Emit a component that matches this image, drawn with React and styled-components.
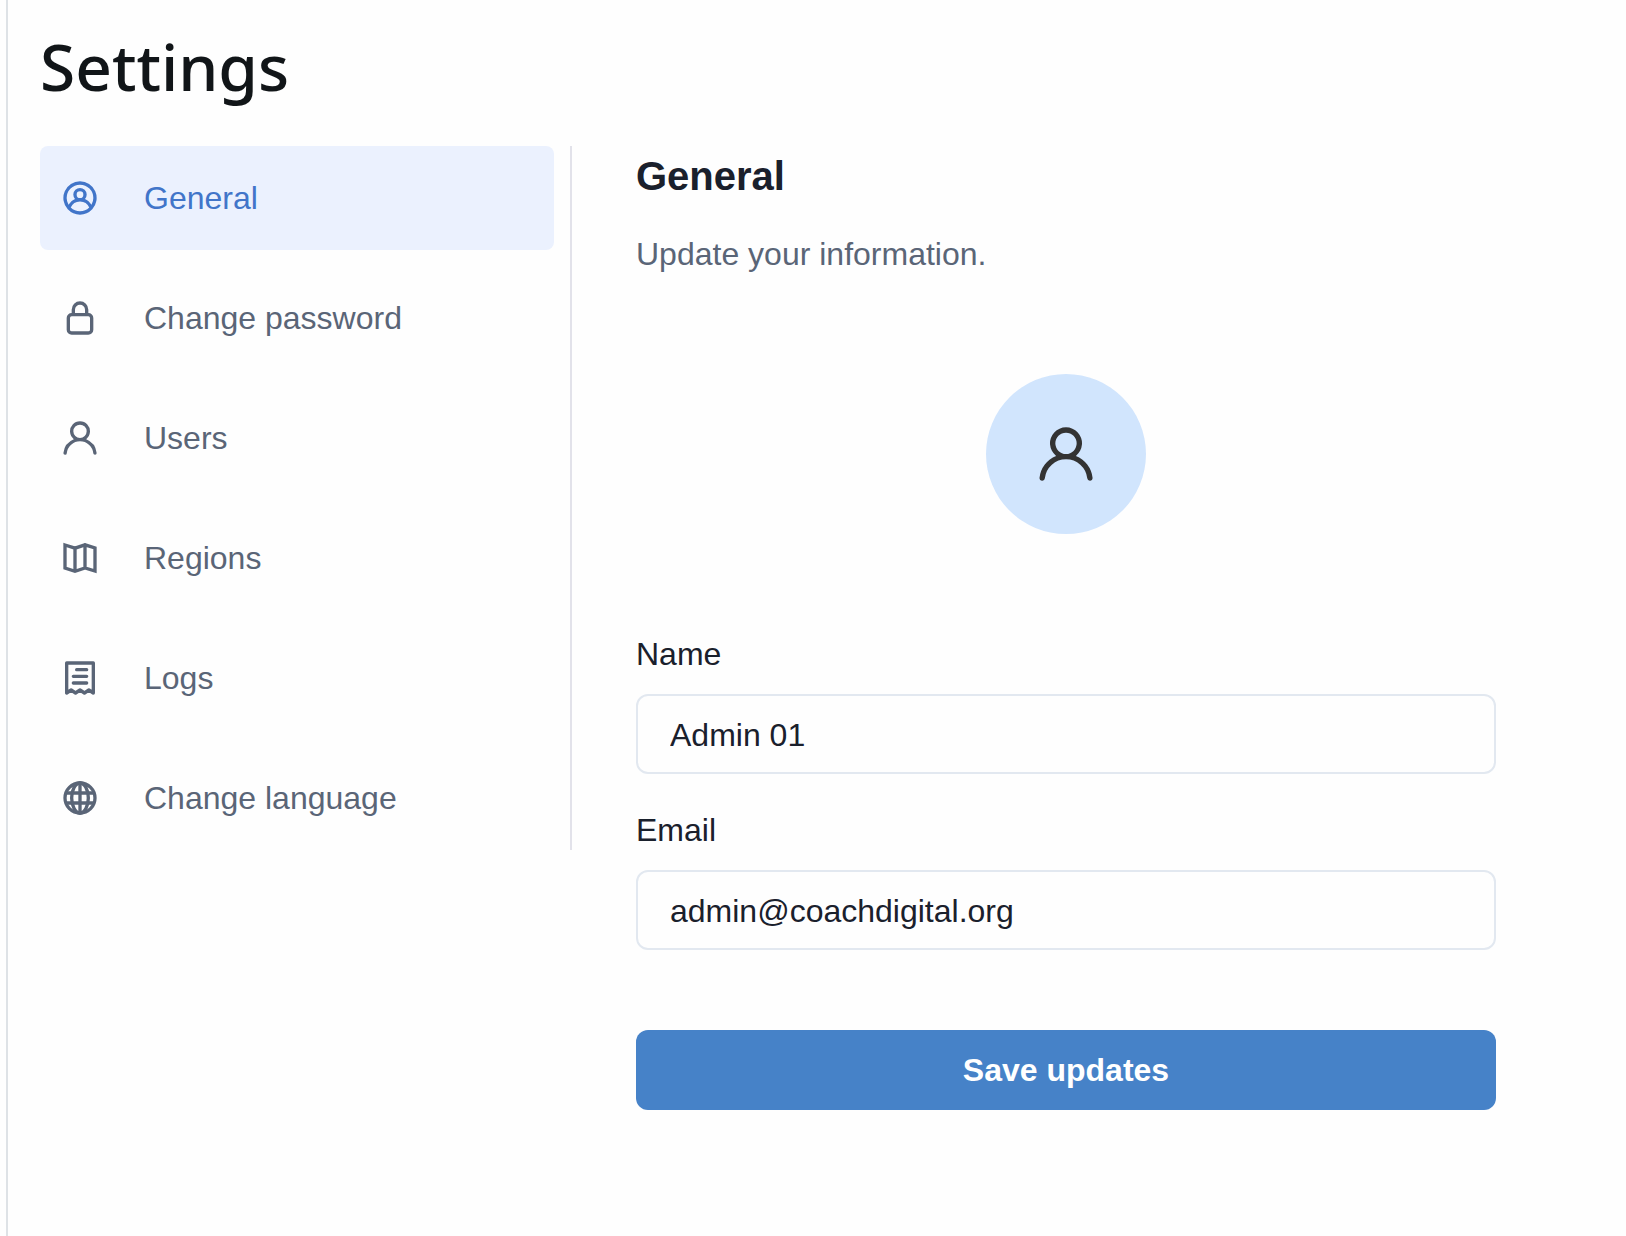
import React, { useState } from "react";
import styled, { createGlobalStyle } from "styled-components";

const GlobalStyle = createGlobalStyle`
  *, *::before, *::after { box-sizing: border-box; }
  body {
    margin: 0;
    background: #fefefe;
    color: #1a202c;
    font-family: "Liberation Sans", Arial, sans-serif;
    font-size: 32px;
    line-height: 48px;
  }
  h1, h2, p { margin: 0; }
`;

const Page = styled.main`
  min-height: 100vh;
  margin-left: 6px;
  padding: 24px 32px;
  border-left: 2px solid #dee2e6;
`;

const Title = styled.h1`
  margin-bottom: 36px;
  color: #111518;
  font-family: "Noto Sans", sans-serif;
  font-size: 64px;
  font-weight: 500;
  line-height: 86px;
`;

const Columns = styled.div`
  display: grid;
  grid-template-columns: minmax(360px, 532px) minmax(0, 1fr);
  align-items: start;
`;

const Menu = styled.nav`
  display: flex;
  flex-direction: column;
  gap: 16px;
  padding-right: 16px;
  border-right: 2px solid #e2e2ea;
`;

const MenuLink = styled.a`
  display: flex;
  align-items: center;
  gap: 44px;
  height: 104px;
  padding: 0 20px;
  border-radius: 8px;
  background: ${({ $active }) => ($active ? "#ebf1fe" : "transparent")};
  color: ${({ $active }) => ($active ? "#4175c9" : "#5a6577")};
  text-decoration: none;
`;

const Icon = styled.svg`
  flex: none;
  width: ${({ $size }) => $size}px;
  height: ${({ $size }) => $size}px;
`;

const Panel = styled.section`
  padding: 0 98px 0 64px;
`;

const PanelTitle = styled.h2`
  margin-bottom: 24px;
  font-size: 40px;
  font-weight: 700;
  line-height: 60px;
`;

const Hint = styled.p`
  color: #5a6577;
`;

const Avatar = styled.div`
  display: grid;
  place-items: center;
  width: 160px;
  height: 160px;
  margin: 96px auto;
  border-radius: 50%;
  background: #d1e5fd;
  color: #333333;
`;

const Form = styled.form`
  display: flex;
  flex-direction: column;
  gap: 32px;
`;

const Field = styled.div`
  display: flex;
  flex-direction: column;
  gap: 16px;
`;

const Input = styled.input`
  width: 100%;
  height: 80px;
  padding: 2px 32px 0;
  border: 2px solid #e2e8f0;
  border-radius: 12px;
  background: transparent;
  color: inherit;
  font: inherit;
`;

const SaveButton = styled.button`
  height: 80px;
  margin-top: 48px;
  border: 0;
  border-radius: 12px;
  background: #4682c8;
  color: #ffffff;
  font: inherit;
  font-weight: 700;
  cursor: pointer;
`;

const USER_PATH =
  "M15.71,12.71a6,6,0,1,0-7.42,0,10,10,0,0,0-6.22,8.18,1,1,0,0,0,2,.22,8,8,0,0,1,15.9,0,1,1,0,0,0,1,.89h.11a1,1,0,0,0,.88-1.1A10,10,0,0,0,15.71,12.71ZM12,12a4,4,0,1,1,4-4A4,4,0,0,1,12,12Z";

const stroked = {
  fill: "none",
  stroke: "currentColor",
  strokeWidth: 2,
  strokeLinecap: "round",
  strokeLinejoin: "round",
};

const glyphs = {
  account: (
    <path
      fill="currentColor"
      d="M12,2A10,10,0,0,0,4.65,18.76h0a10,10,0,0,0,14.7,0h0A10,10,0,0,0,12,2Zm0,18a8,8,0,0,1-5.55-2.25,6,6,0,0,1,11.1,0A8,8,0,0,1,12,20ZM10,10a2,2,0,1,1,2,2A2,2,0,0,1,10,10Zm8.91,6A8,8,0,0,0,15,12.62a4,4,0,1,0-6,0A8,8,0,0,0,5.09,16,7.92,7.92,0,0,1,4,12a8,8,0,0,1,16,0A7.92,7.92,0,0,1,18.91,16Z"
    />
  ),
  lock: (
    <path
      fill="currentColor"
      d="M17,9V7A5,5,0,0,0,7,7V9a3,3,0,0,0-3,3v7a3,3,0,0,0,3,3H17a3,3,0,0,0,3-3V12A3,3,0,0,0,17,9ZM9,7a3,3,0,0,1,6,0V9H9Zm9,12a1,1,0,0,1-1,1H7a1,1,0,0,1-1-1V12a1,1,0,0,1,1-1H17a1,1,0,0,1,1,1Z"
    />
  ),
  user: <path fill="currentColor" d={USER_PATH} />,
  map: (
    <path
      {...stroked}
      strokeLinejoin="miter"
      d="M3 4.2 9 6.1l6-2 6 1.9V19.8l-6-1.8-6 2-6-2ZM9 6v14M15 4v14"
    />
  ),
  receipt: (
    <path
      {...stroked}
      d="M4 3H20V21L17.33 19.2 14.67 21 12 19.2 9.33 21 6.67 19.2 4 21ZM10 7H16M8 11H16M8 15H16"
    />
  ),
  globe: (
    <g {...stroked}>
      <circle cx="12" cy="12" r="9" />
      <ellipse cx="12" cy="12" rx="5" ry="9" />
      <path d="M12 3v18M4 9h16M4 15h16" />
    </g>
  ),
};

function Glyph({ name, size = 40 }) {
  return (
    <Icon $size={size} viewBox="0 0 24 24" aria-hidden="true">
      {glyphs[name]}
    </Icon>
  );
}

const sections = [
  { id: "general", label: "General", icon: "account" },
  { id: "password", label: "Change password", icon: "lock" },
  { id: "users", label: "Users", icon: "user" },
  { id: "regions", label: "Regions", icon: "map" },
  { id: "logs", label: "Logs", icon: "receipt" },
  { id: "language", label: "Change language", icon: "globe" },
];

export default function App() {
  const [name, setName] = useState("Admin 01");
  const [email, setEmail] = useState("admin@coachdigital.org");

  return (
    <>
      <GlobalStyle />
      <Page>
        <Title>Settings</Title>
        <Columns>
          <Menu>
            {sections.map(({ id, label, icon }) => (
              <MenuLink
                key={id}
                href={`#${id}`}
                $active={id === "general"}
                aria-current={id === "general" ? "page" : undefined}
              >
                <Glyph name={icon} />
                {label}
              </MenuLink>
            ))}
          </Menu>
          <Panel>
            <PanelTitle>General</PanelTitle>
            <Hint>Update your information.</Hint>
            <Avatar>
              <Glyph name="user" size={64} />
            </Avatar>
            <Form onSubmit={(event) => event.preventDefault()}>
              <Field>
                <label htmlFor="name">Name</label>
                <Input
                  id="name"
                  type="text"
                  value={name}
                  onChange={(event) => setName(event.target.value)}
                />
              </Field>
              <Field>
                <label htmlFor="email">Email</label>
                <Input
                  id="email"
                  type="email"
                  value={email}
                  onChange={(event) => setEmail(event.target.value)}
                />
              </Field>
              <SaveButton type="submit">Save updates</SaveButton>
            </Form>
          </Panel>
        </Columns>
      </Page>
    </>
  );
}
